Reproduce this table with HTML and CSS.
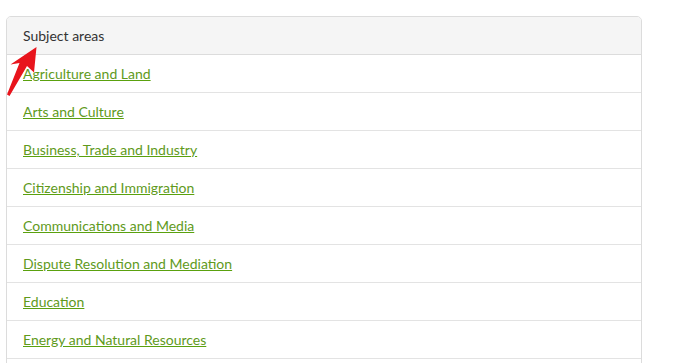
FILE: index.html
```html
<!DOCTYPE html>
<html>
<head>
<meta charset="utf-8">
<link rel="stylesheet" href="styles.css">
</head>
<body>
<div class="panel">
  <div class="panel-heading">Subject areas</div>
  <ul class="list">
    <li class="item"><a href="#">Agriculture and Land</a></li>
    <li class="item"><a href="#">Arts and Culture</a></li>
    <li class="item"><a href="#">Business, Trade and Industry</a></li>
    <li class="item"><a href="#">Citizenship and Immigration</a></li>
    <li class="item"><a href="#">Communications and Media</a></li>
    <li class="item"><a href="#">Dispute Resolution and Mediation</a></li>
    <li class="item"><a href="#">Education</a></li>
    <li class="item"><a href="#">Energy and Natural Resources</a></li>
  </ul>
</div>
<svg class="arrow" width="40" height="60" viewBox="0 0 40 60">
  <polygon points="36.5,3 34,28.5 27,22 9.5,52 7,50.5 19.5,19 10.5,20.5" fill="#e8141c"/>
</svg>
</body>
</html>
```

FILE: styles.css
```css
html, body {
  margin: 0;
  padding: 0;
  background: #fff;
}
body {
  padding: 16px 0 0 6px;
  font-family: Lato, "Liberation Sans", sans-serif;
  font-size: 14px;
  color: #333;
  overflow: hidden;
  height: 363px;
  box-sizing: border-box;
  position: relative;
}
.panel {
  width: 636px;
  box-sizing: border-box;
  border: 1px solid #dcdcdc;
  border-radius: 5px;
  overflow: hidden;
}
.panel-heading {
  background: #f5f5f5;
  height: 37px;
  line-height: 38px;
  padding: 0 16px;
  border-bottom: 1px solid #dcdcdc;
  color: #333;
}
.list {
  list-style: none;
  margin: 0;
  padding: 0 0 30px;
}
.item {
  height: 37px;
  line-height: 38px;
  padding: 0 16px;
  border-bottom: 1px solid #e3e3e3;
}
.item a {
  color: #5f9a1c;
  text-decoration: underline;
  text-decoration-color: #5aa10e;
}
.arrow {
  position: absolute;
  left: 0;
  top: 44px;
}
```
